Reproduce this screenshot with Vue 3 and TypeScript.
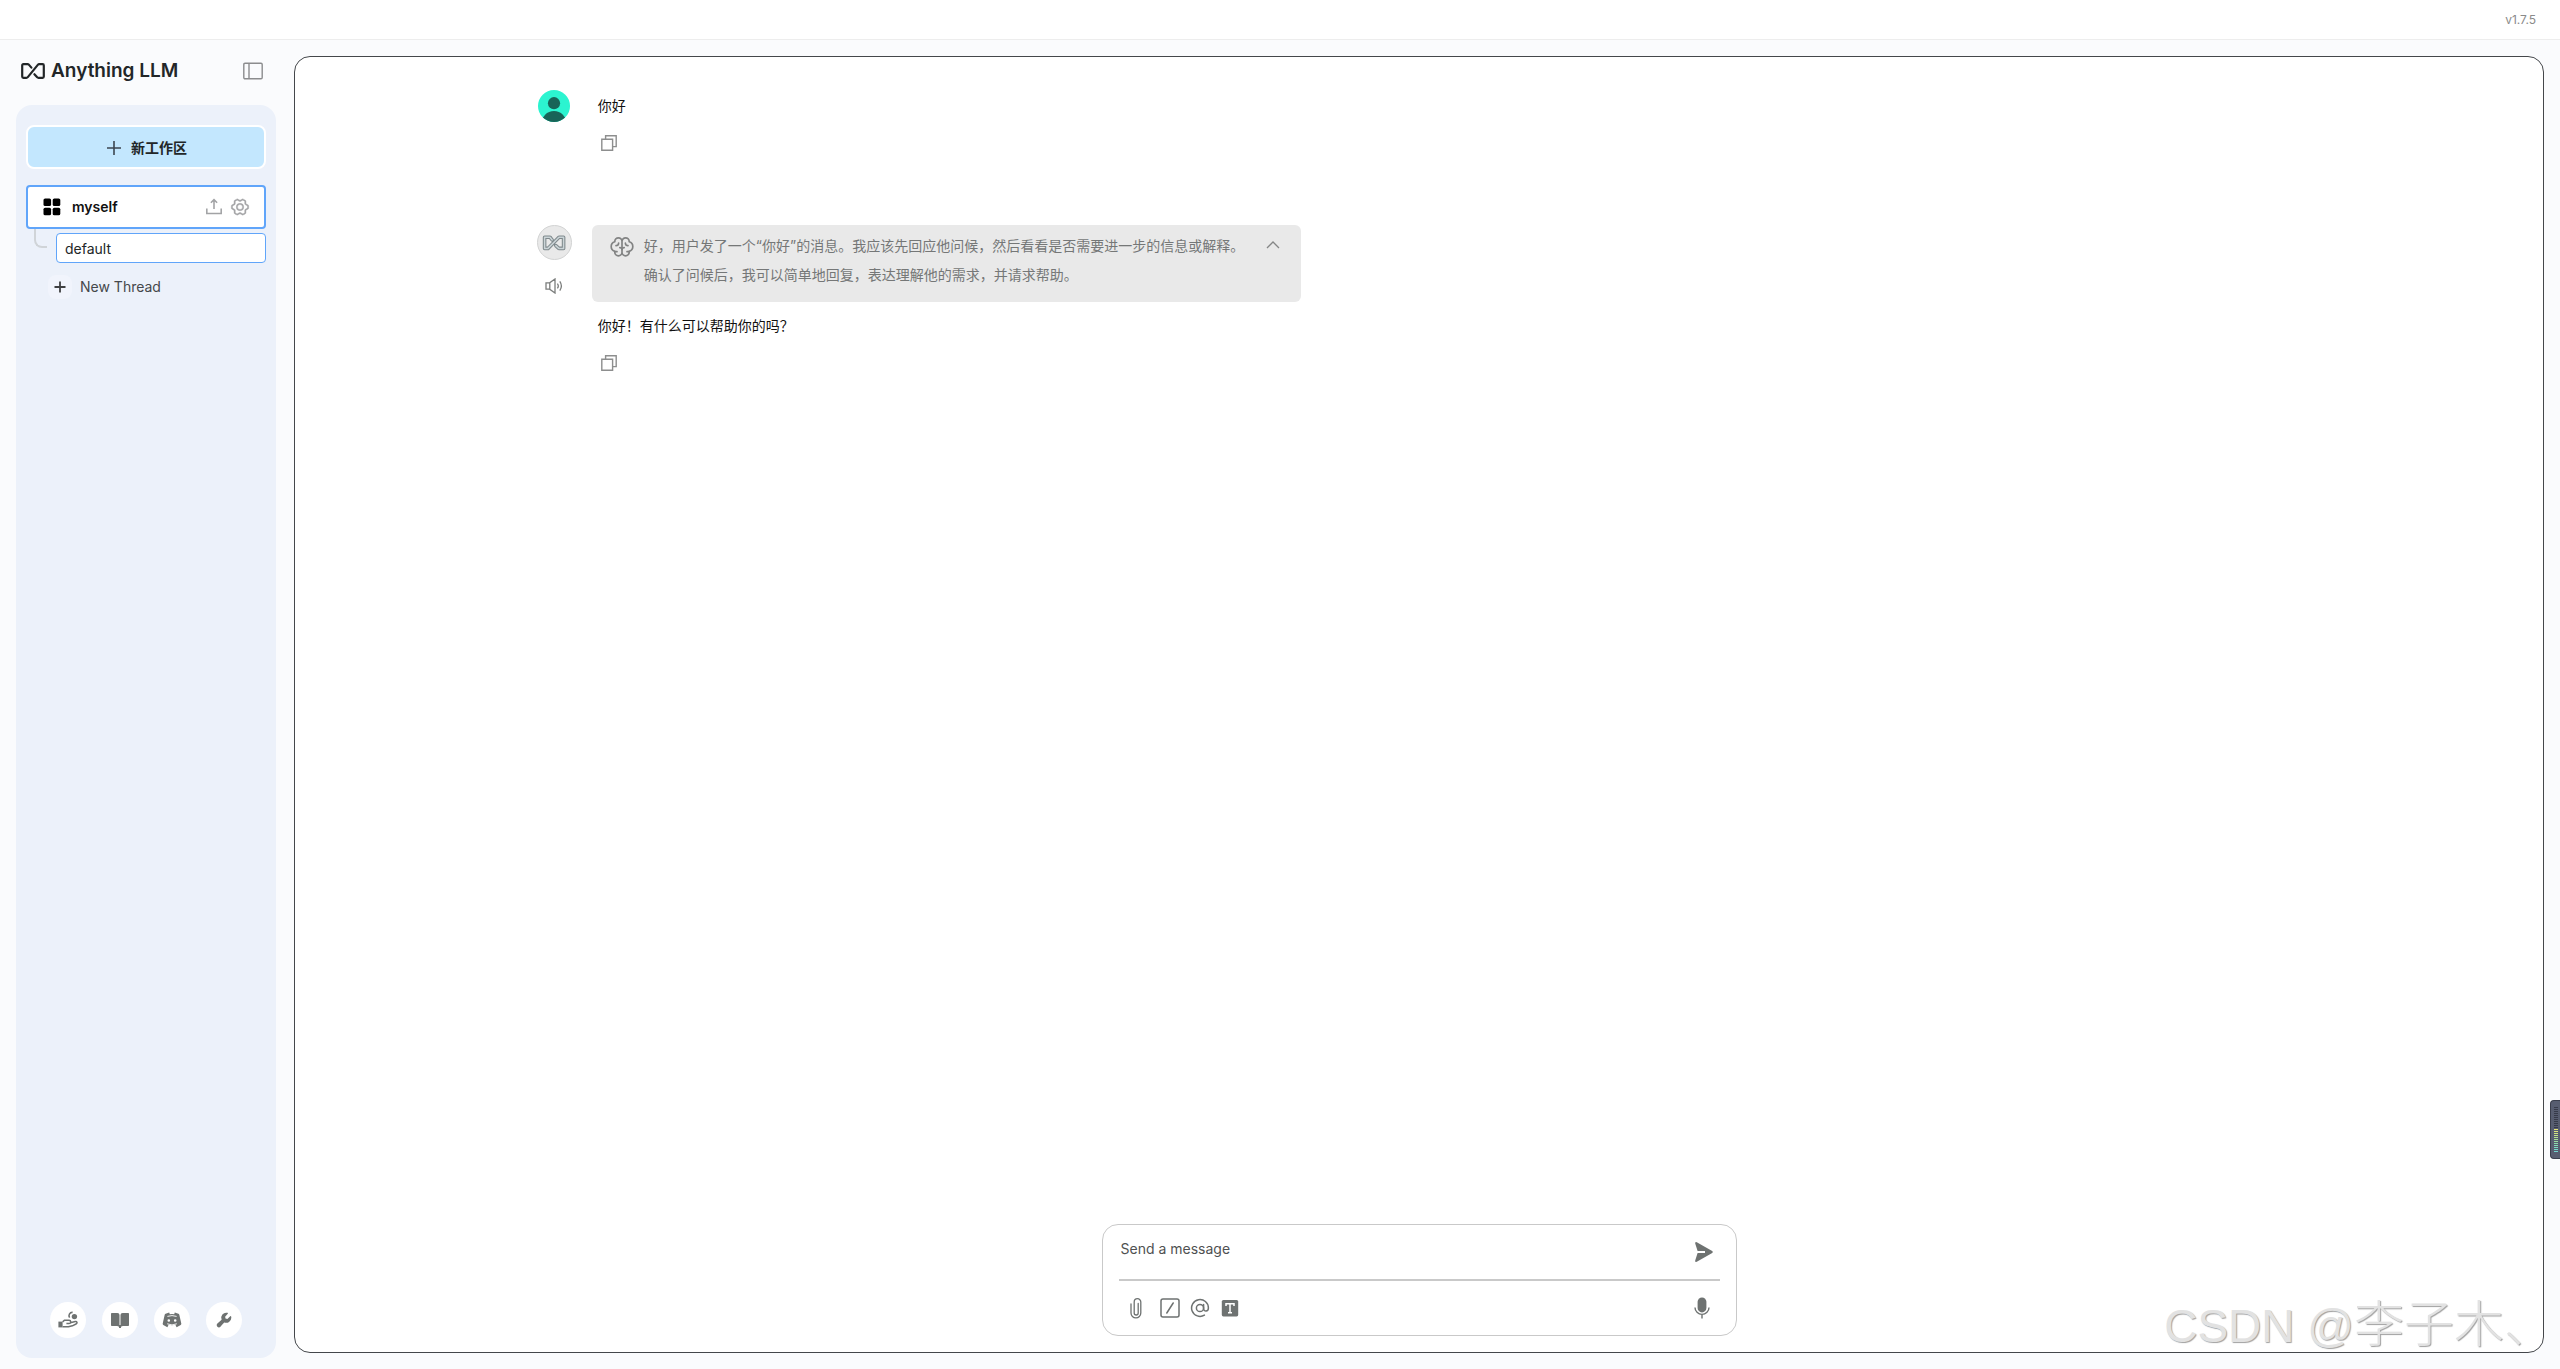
<script setup lang="ts">
import { ref } from 'vue'

const draft = ref('')
const reasoningOpen = ref(true)

const reasoning: string[] = [
  '好，用户发了一个“你好”的消息。我应该先回应他问候，然后看看是否需要进一步的信息或解释。',
  '确认了问候后，我可以简单地回复，表达理解他的需求，并请求帮助。',
]

const meter: string[] = [
  ...Array<string>(11).fill('#363a49'),
  '#e6e577', '#dde67c', '#d0e581', '#c1e388', '#b3e18f', '#a5df97',
  '#99dda0', '#8ddcab', '#84dbb5', '#7cdabf', '#76d8c8', '#72d6d0',
]
</script>

<template>
  <div class="app">
    <header class="titlebar"><span>v1.7.5</span></header>

    <div class="body">
      <aside class="sidebar">
        <div class="brand">
          <a href="#" class="logo">
            <svg width="24" height="16" viewBox="0 0 24 16" fill="none" stroke="currentColor" stroke-width="2.2" stroke-linejoin="round" stroke-linecap="round">
              <path d="M10.4 4.6 7.8 1.6Q7.3 1.2 6.6 1.2H2.4Q1.2 1.2 1.2 2.4V13.6Q1.2 14.8 2.4 14.8H5.4Q6.2 14.8 6.8 14.1L16.8 1.9Q17.4 1.2 18.2 1.2H21.6Q22.8 1.2 22.8 2.4V13.6Q22.8 14.8 21.6 14.8H17.4Q16.7 14.8 16.2 14.3L13.4 11.2" />
            </svg>
            <span>Anything LLM</span>
          </a>
          <button class="plain" type="button" aria-label="Toggle sidebar">
            <svg width="20" height="18" viewBox="0 0 20 18" fill="none" stroke="#8b8c8e" stroke-width="1.4">
              <rect x="0.8" y="1.2" width="18.4" height="15.6" rx="1.2" /><path d="M6 1.2V16.8" />
            </svg>
          </button>
        </div>

        <nav class="panel">
          <button class="new-workspace" type="button">
            <svg width="14" height="14" viewBox="0 0 14 14" stroke="#3c4650" stroke-width="1.6"><path d="M7 0V14M0 7H14" /></svg>
            <span>新工作区</span>
          </button>

          <div class="workspace">
            <a href="#" class="workspace-link">
              <svg width="18" height="18" viewBox="0 0 18 18" fill="#000">
                <rect x="0.5" y="0.5" width="7.6" height="7.6" rx="1.6" /><rect x="9.7" y="0.5" width="7.6" height="7.6" rx="1.6" />
                <rect x="0.5" y="9.7" width="7.6" height="7.6" rx="1.6" /><rect x="9.7" y="9.7" width="7.6" height="7.6" rx="1.6" />
              </svg>
              <span>myself</span>
            </a>
            <button class="plain" type="button" aria-label="Upload documents">
              <svg width="20" height="20" viewBox="0 0 256 256" fill="none" stroke="#a2a3a5" stroke-width="20"><path d="M128 152V34M88 74 128 34 168 74M220 148V212H36V148" /></svg>
            </button>
            <button class="plain" type="button" aria-label="Workspace settings">
              <svg width="20" height="20" viewBox="0 0 256 256" fill="#a2a3a5" stroke="#a2a3a5" stroke-width="5">
                <path d="M128,80a48,48,0,1,0,48,48A48.05,48.05,0,0,0,128,80Zm0,80a32,32,0,1,1,32-32A32,32,0,0,1,128,160Zm109.94-52.79a8,8,0,0,0-3.89-5.4l-29.83-17-.12-33.62a8,8,0,0,0-2.83-6.08,111.91,111.91,0,0,0-36.72-20.67,8,8,0,0,0-6.46.59L128,41.85,97.88,25a8,8,0,0,0-6.47-.6A112.1,112.1,0,0,0,54.73,45.15a8,8,0,0,0-2.83,6.07l-.15,33.65-29.83,17a8,8,0,0,0-3.89,5.4,106.47,106.47,0,0,0,0,41.56,8,8,0,0,0,3.89,5.4l29.83,17,.12,33.62a8,8,0,0,0,2.83,6.08,111.91,111.91,0,0,0,36.72,20.67,8,8,0,0,0,6.46-.59L128,214.15,158.12,231a7.91,7.91,0,0,0,3.9,1,8.09,8.09,0,0,0,2.57-.42,112.1,112.1,0,0,0,36.68-20.73,8,8,0,0,0,2.83-6.07l.15-33.65,29.83-17a8,8,0,0,0,3.89-5.4A106.47,106.47,0,0,0,237.94,107.21Zm-15,34.91-28.57,16.25a8,8,0,0,0-3,3c-.58,1-1.19,2.06-1.81,3.06a7.94,7.94,0,0,0-1.22,4.21l-.15,32.25a95.89,95.89,0,0,1-25.37,14.3L134,199.13a8,8,0,0,0-3.91-1h-.19c-1.21,0-2.43,0-3.64,0a8.08,8.08,0,0,0-4.1,1l-28.84,16.1A96,96,0,0,1,67.88,201l-.11-32.2a8,8,0,0,0-1.22-4.22c-.62-1-1.23-2-1.8-3.06a8.09,8.09,0,0,0-3-3.06l-28.6-16.29a90.49,90.49,0,0,1,0-28.26L61.67,97.63a8,8,0,0,0,3-3c.58-1,1.19-2.06,1.81-3.06a7.94,7.94,0,0,0,1.22-4.21l.15-32.25a95.89,95.89,0,0,1,25.37-14.3L122,56.87a8,8,0,0,0,4.1,1c1.21,0,2.43,0,3.64,0a8.08,8.08,0,0,0,4.1-1l28.84-16.1A96,96,0,0,1,188.12,55l.11,32.2a8,8,0,0,0,1.22,4.22c.62,1,1.23,2,1.8,3.06a8.09,8.09,0,0,0,3,3.06l28.6,16.29A90.49,90.49,0,0,1,222.9,142.12Z" />
              </svg>
            </button>
          </div>

          <div class="threads">
            <span class="branch"></span>
            <a href="#" class="thread">default</a>
          </div>
          <button class="new-thread" type="button">
            <span class="new-thread-icon">
              <svg width="12" height="12" viewBox="0 0 12 12" stroke="#3f4042" stroke-width="1.8"><path d="M6 0.5V11.5M0.5 6H11.5" /></svg>
            </span>
            <span>New Thread</span>
          </button>

          <footer class="links">
            <a href="#" aria-label="Support the project">
              <svg width="20" height="18" viewBox="0 0 20 18" fill="#6e7271">
                <circle cx="16.4" cy="5.6" r="2.7" /><path d="M14.6 1.4a3.3 3.3 0 0 0-3 5.2" fill="none" stroke="#6e7271" stroke-width="1.6" />
                <path d="M0.4 10.6H4.6V16.4H0.4Z" />
                <path d="M4.6 10.8 6.6 9.2H11a1.7 1.7 0 0 1 0 3.4H8.4M12.4 11.8l4.8-1.2c2-.4 2.4 1.6.8 2.4l-3.6 1.8-4 1H4.6" fill="none" stroke="#6e7271" stroke-width="1.5" stroke-linejoin="round" />
              </svg>
            </a>
            <a href="#" aria-label="Documentation">
              <svg width="20" height="18" viewBox="0 0 20 18" fill="#6e7271"><path d="M1.8 2H7.4Q9.5 2 9.5 4V16.8Q9 15 7.2 15H1.8Q1 15 1 14.2V2.8Q1 2 1.8 2ZM18.2 2H12.6Q10.5 2 10.5 4V16.8Q11 15 12.8 15H18.2Q19 15 19 14.2V2.8Q19 2 18.2 2Z" /><path d="M9 14H11V17H9Z" /></svg>
            </a>
            <a href="#" aria-label="Discord">
              <svg width="20" height="18" viewBox="0 0 20 18" fill="#6e7271">
                <path fill-rule="evenodd" d="M7.2 1.6 7.8 3.2Q10 2.8 12.2 3.2L12.8 1.6 16.4 2.8Q17 3 17.3 3.8L19.3 12.6Q19.5 13.5 18.7 14L14.6 16.2 13.4 13.7Q10 14.6 6.6 13.7L5.4 16.2 1.3 14Q.5 13.5.7 12.6L2.7 3.8Q3 3 3.6 2.8ZM6.8 8.2A1.3 1.3 0 1 0 6.8 10.8 1.3 1.3 0 0 0 6.8 8.2ZM13.2 8.2A1.3 1.3 0 1 0 13.2 10.8 1.3 1.3 0 0 0 13.2 8.2Z" />
                <path d="M5.4 5.4Q10 3.8 14.6 5.4M5.2 12.8Q10 15 14.8 12.8" fill="none" stroke="#fff" stroke-width="0.9" />
              </svg>
            </a>
            <a href="#" aria-label="Settings">
              <svg width="18" height="18" viewBox="0 0 256 256" fill="#6e7271"><path d="M232,96a72,72,0,0,1-100.94,66L79,222.22c-.12.14-.26.29-.39.42a32,32,0,0,1-45.26-45.26c.14-.13.28-.27.43-.39L94,124.94a72.07,72.07,0,0,1,83.54-98.78,8,8,0,0,1,3.93,13.19L144,80l5.66,26.35L176,112l40.65-37.52a8,8,0,0,1,13.19,3.93A72.6,72.6,0,0,1,232,96Z" /></svg>
            </a>
          </footer>
        </nav>
      </aside>

      <main class="chat">
        <section class="history">
          <article class="message">
            <div class="side">
              <svg class="avatar" width="32" height="32" viewBox="0 0 32 32">
                <defs><clipPath id="face"><circle cx="16" cy="16" r="16" /></clipPath></defs>
                <g clip-path="url(#face)"><rect width="32" height="32" fill="#2cf4d0" /><circle cx="16" cy="13.2" r="6.1" fill="#186458" /><circle cx="16" cy="33.6" r="12.6" fill="#186458" /></g>
              </svg>
            </div>
            <div class="content">
              <p class="text">你好</p>
              <button class="plain copy" type="button" aria-label="Copy">
                <svg width="16" height="16" viewBox="0 0 16 16" fill="none" stroke="#8d8e8e" stroke-width="1.4"><path d="M0.8 4.3H11.6V15.2H0.8ZM4.6 4.3V0.8H15.2V11.6H11.6" /></svg>
              </button>
            </div>
          </article>

          <article class="message">
            <div class="side">
              <span class="bot">
                <svg width="24" height="16" viewBox="0 0 24 16" fill="none" stroke-linejoin="round" stroke-linecap="round">
                  <g stroke="#7f898c" stroke-width="3.6"><path d="M10.2 5 8 2.2H2.6V13.4H6L17 2.2H21.6V13.4H16.8L13.8 10.6" /></g>
                  <g stroke="#cbd4d7" stroke-width="1.5"><path d="M10.2 5 8 2.2H2.6V13.4H6L17 2.2H21.6V13.4H16.8L13.8 10.6" /></g>
                </svg>
              </span>
              <button class="plain" type="button" aria-label="Read aloud">
                <svg width="18" height="16" viewBox="0 0 18 16" fill="none" stroke="#7b7d7c" stroke-width="1.3"><path d="M1 4.8H4.6L10 1V15L4.6 11.2H1ZM4.8 4.8V11.2M12.4 5.6Q14.2 8 12.4 10.4M14.8 3.4Q18 8 14.8 12.6" /></svg>
              </button>
            </div>
            <div class="content">
              <div class="thought">
                <svg width="24" height="24" viewBox="0 0 24 24" fill="none" stroke="#828383" stroke-width="1.7" stroke-linecap="round" stroke-linejoin="round">
                  <path d="M12 6.4a3.6 3.6 0 0 0-7.2 0v.4A5 5 0 0 0 4.8 16.4v.8a3.6 3.6 0 0 0 7.2 0ZM12 6.4a3.6 3.6 0 0 1 7.2 0v.4a5 5 0 0 1 0 9.6v.8a3.6 3.6 0 0 1-7.2 0" />
                  <path d="M12 14.6Q12 12.6 9.8 12.6M12 14.6Q12 12.6 14.2 12.6M8.6 8.2Q8.4 10.6 6 10.6M15.4 8.2Q15.6 10.6 18 10.6M4.8 16.4Q5.6 16.8 7 16.6M19.2 16.4Q18.4 16.8 17 16.6" />
                </svg>
                <div class="thought-text"><p v-for="line in reasoning" :key="line">{{ line }}</p></div>
                <button class="plain" type="button" aria-label="Toggle reasoning" :aria-expanded="reasoningOpen" @click="reasoningOpen = !reasoningOpen">
                  <svg width="14" height="8" viewBox="0 0 14 8" fill="none" stroke="#858686" stroke-width="1.3"><path d="M1 7 7 1 13 7" /></svg>
                </button>
              </div>
              <p class="text">你好！有什么可以帮助你的吗？</p>
              <button class="plain copy" type="button" aria-label="Copy">
                <svg width="16" height="16" viewBox="0 0 16 16" fill="none" stroke="#8d8e8e" stroke-width="1.4"><path d="M0.8 4.3H11.6V15.2H0.8ZM4.6 4.3V0.8H15.2V11.6H11.6" /></svg>
              </button>
            </div>
          </article>
        </section>

        <form class="composer" @submit.prevent>
          <div class="row entry">
            <textarea v-model="draft" rows="1" placeholder="Send a message" aria-label="Send a message"></textarea>
            <button class="plain" type="submit" aria-label="Send">
              <svg width="20" height="22" viewBox="0 0 20 22" fill="#6e7271"><path d="M1.2 2.6Q.8.6 2.8 1.2L18.2 10Q19.6 11 18.2 12L2.8 20.8Q.8 21.4 1.2 19.4L3.6 12H11V10H3.6Z" /></svg>
            </button>
          </div>
          <div class="row tools">
            <button class="plain clip" type="button" aria-label="Attach a file">
              <svg width="12" height="22" viewBox="0 0 12 22" fill="none" stroke="#6e7271" stroke-width="1.3" stroke-linecap="round"><path d="M8.2 6.4V16a2 2 0 0 1-4 0V5a3.2 3.2 0 0 1 6.6 0v11a4.8 4.8 0 0 1-9.8 0V7" /></svg>
            </button>
            <button class="plain" type="button" aria-label="Slash commands">
              <svg width="20" height="20" viewBox="0 0 20 20" fill="none" stroke="#6e7271" stroke-width="1.5"><rect x="1" y="1" width="18" height="18" rx="2" /><path d="M13.2 5 6.8 15" stroke-linecap="round" /></svg>
            </button>
            <button class="plain" type="button" aria-label="Mention an agent">
              <svg width="20" height="20" viewBox="0 0 20 20" fill="none" stroke="#6e7271" stroke-width="1.5" stroke-linecap="round"><circle cx="10" cy="10" r="3.6" /><path d="M13.6 6.4V10.6C13.6 14 18.4 14 18.4 10A8.4 8.4 0 1 0 14.4 17.1" /></svg>
            </button>
            <button class="plain" type="button" aria-label="Text size">
              <svg width="20" height="20" viewBox="0 0 20 20"><rect x="1.8" y="2" width="16.4" height="16.4" rx="1.6" fill="#6e7271" /><path d="M6 8V5.8H14V8M10 5.8V14.6M8 14.8H12" fill="none" stroke="#fff" stroke-width="1.5" /></svg>
            </button>
            <button class="plain mic" type="button" aria-label="Speak">
              <svg width="16" height="22" viewBox="0 0 16 22"><rect x="3.6" y="0.4" width="8.8" height="15" rx="4.4" fill="#6e7271" /><path d="M1 10.4a7 7 0 0 0 14 0M8 17.4V21.6" fill="none" stroke="#6e7271" stroke-width="1.4" /></svg>
            </button>
          </div>
        </form>
      </main>
    </div>

    <div class="meter"><i v-for="(tone, i) in meter" :key="i" :style="{ background: tone }"></i></div>
    <div class="watermark"><span>CSDN @</span>李子木、</div>
  </div>
</template>

<style>
body {
  margin: 0;
  background: #fafbfd;
}
</style>

<style scoped>
* {
  box-sizing: border-box;
}

.app {
  position: relative;
  display: flex;
  flex-direction: column;
  min-height: 100vh;
  background: #fafbfd;
  color: #222628;
  font: 14px/20px Inter, "Noto Sans CJK SC", sans-serif;
}

a {
  color: inherit;
  text-decoration: none;
}

p {
  margin: 0;
}

svg {
  display: block;
  flex: none;
}

button {
  font: inherit;
  color: inherit;
  cursor: pointer;
}

.plain {
  padding: 0;
  border: 0;
  background: none;
}

.titlebar {
  display: flex;
  align-items: center;
  justify-content: flex-end;
  height: 40px;
  padding-right: 24px;
  border-bottom: 1px solid #ededed;
  background: #fff;
  color: #8a8a8a;
  font-size: 12px;
}

.body {
  display: flex;
  flex: 1;
  gap: 18px;
  padding: 16px 16px 0;
}

.sidebar {
  display: flex;
  flex-direction: column;
  flex: none;
  width: 260px;
  padding-bottom: 11px;
}

.brand {
  display: flex;
  align-items: center;
  justify-content: space-between;
  height: 30px;
  margin-bottom: 19px;
  padding: 0 13px 0 5px;
}

.logo {
  display: flex;
  align-items: center;
  gap: 6px;
  font-size: 19px;
  font-weight: 600;
}

.panel {
  display: flex;
  flex: 1;
  flex-direction: column;
  padding: 20px 10px;
  border-radius: 16px;
  background: #ecf1fa;
}

.new-workspace {
  display: flex;
  align-items: center;
  justify-content: center;
  gap: 10px;
  height: 44px;
  margin-bottom: 16px;
  padding: 1px 4px 0 6px;
  border: 2px solid #fff;
  border-radius: 8px;
  background: #c3e7fe;
  font-weight: 600;
}

.workspace {
  display: flex;
  align-items: center;
  gap: 6px;
  height: 44px;
  padding: 0 14px 0 15px;
  border: 2px solid #60a5fa;
  border-radius: 4px;
  background: #fff;
}

.workspace-link {
  display: flex;
  flex: 1;
  align-items: center;
  gap: 11px;
  font-weight: 600;
  color: #111;
}

.threads {
  display: flex;
  margin-left: 8px;
}

.branch {
  width: 13px;
  height: 19px;
  margin-right: 9px;
  border: solid #d0d4d8;
  border-width: 0 0 2px 2px;
  border-bottom-left-radius: 8px;
}

.thread {
  flex: 1;
  height: 30px;
  margin-top: 4px;
  padding: 0 8px;
  border: 1px solid #60a5fa;
  border-radius: 4px;
  background: #fff;
  line-height: 30px;
}

.new-thread {
  display: flex;
  align-items: center;
  gap: 8px;
  margin: 12px 0 0 22px;
  padding: 0;
  border: 0;
  background: none;
  color: #45484b;
}

.new-thread-icon {
  display: grid;
  place-items: center;
  width: 24px;
  height: 24px;
  border-radius: 8px;
  background: #f1f4fc;
}

.links {
  display: flex;
  justify-content: center;
  gap: 16px;
  margin-top: auto;
}

.links a {
  display: grid;
  place-items: center;
  width: 36px;
  height: 36px;
  border-radius: 50%;
  background: #fff;
}

.chat {
  display: flex;
  flex: 1;
  flex-direction: column;
  align-items: center;
  margin-bottom: 16px;
  padding-bottom: 16px;
  border: 1px solid #44474b;
  border-radius: 16px;
  background: #fff;
}

.history {
  display: flex;
  flex: 1;
  flex-direction: column;
  gap: 74px;
  width: 80%;
  padding: 33px 17px;
}

.message {
  display: flex;
  gap: 20px;
}

.side {
  display: flex;
  flex: none;
  flex-direction: column;
  align-items: center;
  gap: 18px;
  width: 35px;
}

.bot {
  display: grid;
  place-items: center;
  width: 35px;
  height: 35px;
  border: 1px solid #d2d3d3;
  border-radius: 50%;
  background: #e9e9e9;
}

.content {
  display: flex;
  flex-direction: column;
  align-items: flex-start;
}

.text {
  padding: 6px;
  color: #111;
}

.copy {
  margin: 13px 9px 0;
}

.thought {
  display: flex;
  align-items: flex-start;
  gap: 10px;
  margin-bottom: 8px;
  padding: 6px 21px 13px 18px;
  border-radius: 6px;
  background: #e9e9e9;
  color: #757777;
}

.thought > svg {
  margin-top: 4px;
}

.thought .plain {
  margin: 10px 0 0 12px;
}

.thought-text {
  line-height: 29px;
}

.composer {
  width: 635px;
  max-width: 100%;
  padding: 0 16px;
  border: 1px solid #c9c9c9;
  border-radius: 16px;
  background: #fff;
}

.row {
  display: flex;
  align-items: center;
}

.entry {
  height: 56px;
  padding: 0 6px 0 2px;
  border-bottom: 2px solid #c9c9c9;
}

.entry textarea {
  flex: 1;
  height: 26px;
  padding: 0;
  border: 0;
  outline: 0;
  background: none;
  color: #222628;
  font: inherit;
  resize: none;
}

.entry textarea::placeholder {
  color: #4f5152;
  opacity: 1;
}

.tools {
  gap: 10px;
  height: 54px;
  padding: 0 10px 0 11px;
}

.clip {
  margin-right: 8px;
}

.mic {
  margin-left: auto;
}

.meter {
  position: absolute;
  top: 1100px;
  right: 0;
  display: grid;
  align-content: start;
  gap: 1px;
  width: 10px;
  height: 59px;
  padding: 6px 2px 0 3px;
  border: 1px solid #3a3e4c;
  border-right: 0;
  border-radius: 4px 0 0 4px;
  background: #575d70;
}

.meter i {
  height: 1px;
}

.watermark {
  position: absolute;
  right: 6px;
  bottom: 8px;
  color: #e2e2e2;
  font: 300 50px/70px "Noto Sans CJK SC", sans-serif;
  text-shadow: 1px 1px 1px #a0a0a0;
  pointer-events: none;
}

.watermark span {
  font-family: "Liberation Sans", sans-serif;
  font-size: 46px;
}
</style>
